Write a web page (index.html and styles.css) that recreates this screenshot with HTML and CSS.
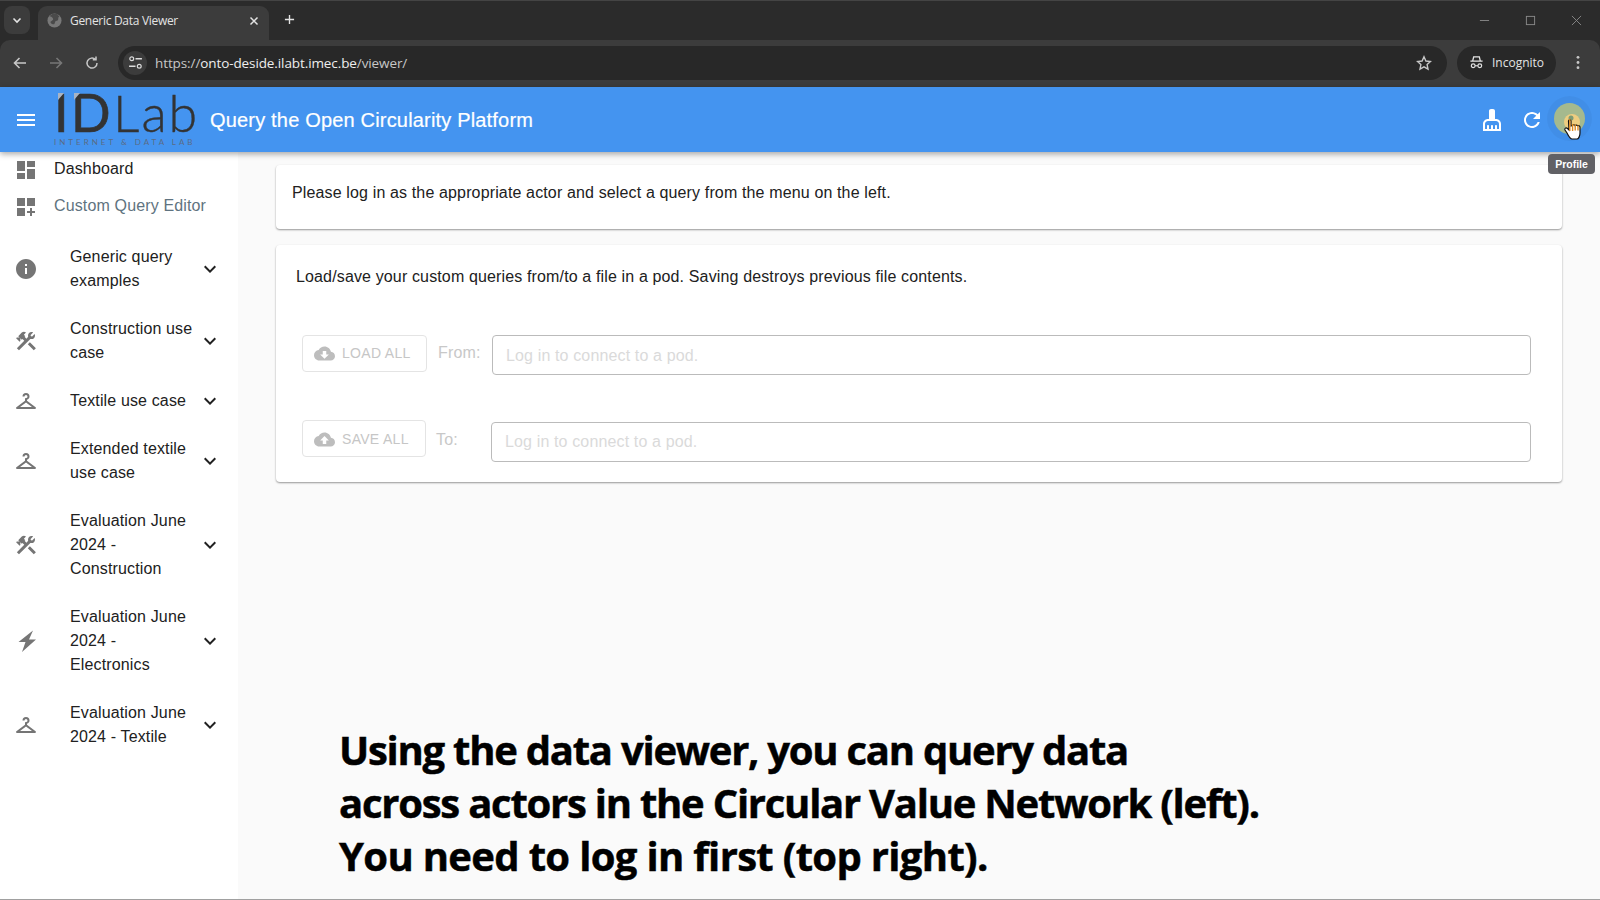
FILE: index.html
```html
<!DOCTYPE html>
<html lang="en">
<head>
<meta charset="utf-8">
<title>Generic Data Viewer</title>
<link rel="stylesheet" href="styles.css">
</head>
<body>
<div class="chrome">
<div class="tabstrip">
  <div class="tabsearch"><svg class="ico12" viewBox="0 0 12 12"><path d="M2.500 4.500L6 8l3.500-3.500" fill="none" stroke="#e3e3e3" stroke-width="1.600"/></svg></div>
  <div class="tab">
    <svg class="fav" viewBox="0 0 16 16"><circle cx="8" cy="8" r="7.500" fill="#787878"/><path d="M2.500 3.500c2 .5 3.500 1 4 2.500S5 8 4 9s1 3 3 3 1-3 2.500-3.500S12 8 12 6s1-2 1.500-1.500L11 1 6 .8z" fill="#4a4a4a"/></svg>
    <span class="tabtitle">Generic Data Viewer</span>
    <svg class="ico12" viewBox="0 0 12 12"><path d="M2.500 2.500l7 7M9.500 2.500l-7 7" stroke="#e3e3e3" stroke-width="1.500"/></svg>
  </div>
  <svg class="newtab" viewBox="0 0 12 12"><path d="M6 1v10M1 6h10" stroke="#e3e3e3" stroke-width="1.500"/></svg>
  <div class="winctl">
    <svg class="win" viewBox="0 0 12 12"><path d="M1 6h10" stroke="#8a8a8a"/></svg>
    <svg class="win" viewBox="0 0 12 12"><rect x="1.500" y="1.500" width="9" height="9" fill="none" stroke="#8a8a8a"/></svg>
    <svg class="win" viewBox="0 0 12 12"><path d="M1 1l10 10M11 1L1 11" stroke="#8a8a8a"/></svg>
  </div>
</div>
<div class="toolbar">
  <svg class="tool" viewBox="0 0 16 16"><path d="M14 8H3M7.500 3L2.500 8l5 5" fill="none" stroke="#c7c7c7" stroke-width="1.600"/></svg>
  <svg class="tool" viewBox="0 0 16 16"><path d="M2 8h11M8.500 3l5 5-5 5" fill="none" stroke="#777" stroke-width="1.600"/></svg>
  <svg class="tool" viewBox="0 0 16 16"><path d="M13 8a5 5 0 1 1-1.500-3.500M12 1.500v3.200H8.800" fill="none" stroke="#c7c7c7" stroke-width="1.500"/></svg>
  <div class="omnibox">
    <div class="siteinfo"><svg viewBox="0 0 14 14" class="ico14"><circle cx="3.500" cy="3.500" r="1.800" fill="none" stroke="#ddd" stroke-width="1.100"/><path d="M7 3.500h6M1 10.500h6" stroke="#ddd" stroke-width="1.200"/><circle cx="10.500" cy="10.500" r="1.800" fill="none" stroke="#ddd" stroke-width="1.100"/></svg></div>
    <span class="url">https://<b class="host">onto-deside.ilabt.imec.be</b>/viewer/</span>
    <svg class="star" viewBox="0 0 16 16"><path d="M8 1.800l1.900 4.200 4.600.5-3.400 3.100.9 4.500L8 11.800l-4 2.300.9-4.500L1.500 6.500l4.600-.5z" fill="none" stroke="#c7c7c7" stroke-width="1.400"/></svg>
  </div>
  <div class="incognito">
    <svg class="ico14" viewBox="0 0 16 16"><path d="M4 6l1-4h6l1 4M1.500 6.500h13" fill="none" stroke="#e3e3e3" stroke-width="1.400"/><circle cx="4.500" cy="11.500" r="2" fill="none" stroke="#e3e3e3" stroke-width="1.300"/><circle cx="11.500" cy="11.500" r="2" fill="none" stroke="#e3e3e3" stroke-width="1.300"/><path d="M6.500 11.500h3" stroke="#e3e3e3" stroke-width="1.200"/></svg>
    <span>Incognito</span>
  </div>
  <svg class="kebab" viewBox="0 0 4 16"><circle cx="2" cy="2.500" r="1.500" fill="#c7c7c7"/><circle cx="2" cy="8" r="1.500" fill="#c7c7c7"/><circle cx="2" cy="13.500" r="1.500" fill="#c7c7c7"/></svg>
</div>
</div>
<header class="appbar">
  <svg class="menu" viewBox="0 0 18 12"><path d="M0 0h18v2H0zM0 5h18v2H0zM0 10h18v2H0z" fill="#fff"/></svg>
  <div class="logo">
    <div class="logo-main"><span class="logo-id">ID</span>Lab</div>
    <div class="logo-sub">INTERNET &amp; DATA LAB</div>
    <svg class="logo-notch" viewBox="0 0 24 7"><path d="M0 0h6L0 7zM16 0h6l-6 7z" fill="#a9b4c4"/></svg>
  </div>
  <h1 class="apptitle">Query the Open Circularity Platform</h1>
  <div class="appactions">
    <svg class="action" viewBox="0 0 24 24"><path d="M16 11h-1V3c0-1.100-.9-2-2-2h-2c-1.100 0-2 .9-2 2v8H8c-2.760 0-5 2.240-5 5v7h18v-7c0-2.760-2.240-5-5-5zm3 10h-2v-3c0-.55-.45-1-1-1s-1 .45-1 1v3h-2v-3c0-.55-.45-1-1-1s-1 .45-1 1v3H9v-3c0-.55-.45-1-1-1s-1 .45-1 1v3H5v-5c0-1.650 1.350-3 3-3h8c1.650 0 3 1.350 3 3v5z" fill="#fff"/></svg>
    <svg class="action" viewBox="0 0 24 24"><path d="M17.650 6.350C16.200 4.900 14.210 4 12 4c-4.420 0-7.990 3.580-7.990 8s3.570 8 7.990 8c3.730 0 6.840-2.550 7.730-6h-2.080c-.82 2.330-3.040 4-5.650 4-3.310 0-6-2.690-6-6s2.690-6 6-6c1.660 0 3.140.69 4.220 1.780L13 11h7V4l-2.350 2.350z" fill="#fff"/></svg>
    <div class="avatar"></div>
  </div>
</header>
<div class="tooltip">Profile</div>
<svg class="cursor" viewBox="0 0 24 30">
  <circle cx="10" cy="10" r="8" fill="#f6cf7e" opacity=".9"/>
  <circle cx="9" cy="6" r="2.500" fill="#7c9a76"/>
  <path d="M6.500 9c0-1.500 2.500-1.500 2.500 0v5l1.500-.5c.5-1 2-1 2.500 0 .8-.7 2-.5 2.500.3 1-.5 2.500 0 2.500 1.500V21c0 3-1.500 6-3 6h-5c-2 0-3-2-5-6l-2-3c-.8-1.500 1-3 2.500-1.500l1.500 1.500z" fill="#fff" stroke="#111" stroke-width="1.200"/>
  <path d="M7.800 7v12M10.600 12v7M13.200 12.500v6M16 13.500v5" stroke="#e08a1e" stroke-width="1.400" fill="none"/>
</svg>
<div class="body">
  <nav class="sidebar">
    <a class="navtop"><svg class="navicon" viewBox="0 0 24 24"><path d="M3 13h8V3H3v10zm0 8h8v-6H3v6zm10 0h8V11h-8v10zm0-18v6h8V3h-8z"/></svg><span>Dashboard</span></a>
    <a class="navtop muted"><svg class="navicon" viewBox="0 0 24 24"><path d="M3 3h8v8H3zm10 0h8v8h-8zM3 13h8v8H3zm15 0h-2v3h-3v2h3v3h2v-3h3v-2h-3z"/></svg><span>Custom Query Editor</span></a>
    <ul class="groups">
      <li class="group"><svg class="navicon" viewBox="0 0 24 24"><path d="M12 2C6.480 2 2 6.480 2 12s4.480 10 10 10 10-4.480 10-10S17.520 2 12 2zm1 15h-2v-6h2v6zm0-8h-2V7h2v2z"/></svg><span class="grouplabel">Generic query examples</span><svg class="chev" viewBox="0 0 24 24"><path d="M7.410 8.590L12 13.170l4.590-4.580L18 10l-6 6-6-6z"/></svg></li>
      <li class="group"><svg class="navicon" viewBox="0 0 24 24"><path d="M13.780 15.300L19.780 21.300L21.890 19.140L15.890 13.140L13.780 15.300ZM17.500 10.100C17.110 10.100 16.690 10.050 16.360 9.910L4.970 21.250L2.860 19.140L10.270 11.740L8.500 9.960L7.780 10.660L6.330 9.250V12.110L5.630 12.810L2.110 9.250L2.810 8.550H5.620L4.220 7.140L7.780 3.580C8.950 2.410 10.830 2.410 12 3.580L9.890 5.740L11.300 7.140L10.590 7.850L12.380 9.630L14.200 7.750C14.060 7.420 14 7 14 6.630C14 4.660 15.560 3.110 17.500 3.110C18.090 3.110 18.610 3.250 19.080 3.530L16.410 6.200L17.910 7.700L20.580 5.030C20.860 5.500 21 6 21 6.630C21 8.550 19.450 10.100 17.500 10.100Z"/></svg><span class="grouplabel">Construction use case</span><svg class="chev" viewBox="0 0 24 24"><path d="M7.410 8.590L12 13.170l4.590-4.580L18 10l-6 6-6-6z"/></svg></li>
      <li class="group"><svg class="navicon" viewBox="0 0 24 24"><path d="M12 4A3.500 3.500 0 0 0 8.500 7.500H10.500A1.500 1.500 0 0 1 12 6A1.500 1.500 0 0 1 13.500 7.500A1.500 1.500 0 0 1 12 9C11.450 9 11 9.450 11 10V11.750L2.400 18.200C1.630 18.780 2.040 20 3 20H21C21.960 20 22.370 18.780 21.600 18.200L13 11.750V10.850C14.440 10.420 15.500 9.080 15.500 7.500A3.500 3.500 0 0 0 12 4M12 13.500L18 18H6Z"/></svg><span class="grouplabel">Textile use case</span><svg class="chev" viewBox="0 0 24 24"><path d="M7.410 8.590L12 13.170l4.590-4.580L18 10l-6 6-6-6z"/></svg></li>
      <li class="group"><svg class="navicon" viewBox="0 0 24 24"><path d="M12 4A3.500 3.500 0 0 0 8.500 7.500H10.500A1.500 1.500 0 0 1 12 6A1.500 1.500 0 0 1 13.500 7.500A1.500 1.500 0 0 1 12 9C11.450 9 11 9.450 11 10V11.750L2.400 18.200C1.630 18.780 2.040 20 3 20H21C21.960 20 22.370 18.780 21.600 18.200L13 11.750V10.850C14.440 10.420 15.500 9.080 15.500 7.500A3.500 3.500 0 0 0 12 4M12 13.500L18 18H6Z"/></svg><span class="grouplabel">Extended textile use case</span><svg class="chev" viewBox="0 0 24 24"><path d="M7.410 8.590L12 13.170l4.590-4.580L18 10l-6 6-6-6z"/></svg></li>
      <li class="group"><svg class="navicon" viewBox="0 0 24 24"><path d="M13.780 15.300L19.780 21.300L21.890 19.140L15.890 13.140L13.780 15.300ZM17.500 10.100C17.110 10.100 16.690 10.050 16.360 9.910L4.970 21.250L2.860 19.140L10.270 11.740L8.500 9.960L7.780 10.660L6.330 9.250V12.110L5.630 12.810L2.110 9.250L2.810 8.550H5.620L4.220 7.140L7.780 3.580C8.950 2.410 10.830 2.410 12 3.580L9.890 5.740L11.300 7.140L10.590 7.850L12.380 9.630L14.200 7.750C14.060 7.420 14 7 14 6.630C14 4.660 15.560 3.110 17.500 3.110C18.090 3.110 18.610 3.250 19.080 3.530L16.410 6.200L17.910 7.700L20.580 5.030C20.860 5.500 21 6 21 6.630C21 8.550 19.450 10.100 17.500 10.100Z"/></svg><span class="grouplabel">Evaluation June 2024 - Construction</span><svg class="chev" viewBox="0 0 24 24"><path d="M7.410 8.590L12 13.170l4.590-4.580L18 10l-6 6-6-6z"/></svg></li>
      <li class="group"><svg class="navicon" viewBox="0 0 24 24"><path d="M19 1.500L4.500 13H11.500L8 23L22 10.500H15Z"/></svg><span class="grouplabel">Evaluation June 2024 - Electronics</span><svg class="chev" viewBox="0 0 24 24"><path d="M7.410 8.590L12 13.170l4.590-4.580L18 10l-6 6-6-6z"/></svg></li>
      <li class="group"><svg class="navicon" viewBox="0 0 24 24"><path d="M12 4A3.500 3.500 0 0 0 8.500 7.500H10.500A1.500 1.500 0 0 1 12 6A1.500 1.500 0 0 1 13.500 7.500A1.500 1.500 0 0 1 12 9C11.450 9 11 9.450 11 10V11.750L2.400 18.200C1.630 18.780 2.040 20 3 20H21C21.960 20 22.370 18.780 21.600 18.200L13 11.750V10.850C14.440 10.420 15.500 9.080 15.500 7.500A3.500 3.500 0 0 0 12 4M12 13.500L18 18H6Z"/></svg><span class="grouplabel">Evaluation June 2024 - Textile</span><svg class="chev" viewBox="0 0 24 24"><path d="M7.410 8.590L12 13.170l4.590-4.580L18 10l-6 6-6-6z"/></svg></li>
    </ul>
  </nav>
  <main class="content">
    <section class="card card-intro">Please log in as the appropriate actor and select a query from the menu on the left.</section>
    <section class="card card-pod">
      <p class="podtext">Load/save your custom queries from/to a file in a pod. Saving destroys previous file contents.</p>
      <div class="podrow podrow-load">
        <button class="podbtn load" disabled><svg class="cloud" viewBox="0 0 24 24"><path d="M19.350 10.040C18.670 6.590 15.640 4 12 4 9.110 4 6.600 5.640 5.350 8.040 2.340 8.360 0 10.910 0 14c0 3.310 2.690 6 6 6h13c2.760 0 5-2.240 5-5 0-2.640-2.050-4.780-4.650-4.960zM17 13l-5 5-5-5h3V9h4v4h3z"/></svg>Load all</button>
        <span class="podlabel from">From:</span>
        <input class="podinput" disabled placeholder="Log in to connect to a pod.">
      </div>
      <div class="podrow podrow-save">
        <button class="podbtn save" disabled><svg class="cloud" viewBox="0 0 24 24"><path d="M19.350 10.040C18.670 6.590 15.640 4 12 4 9.110 4 6.600 5.640 5.350 8.040 2.340 8.360 0 10.910 0 14c0 3.310 2.690 6 6 6h13c2.760 0 5-2.240 5-5 0-2.640-2.050-4.780-4.650-4.960zM14 13v4h-4v-4H7l5-5 5 5h-3z"/></svg>Save all</button>
        <span class="podlabel to">To:</span>
        <input class="podinput" disabled placeholder="Log in to connect to a pod.">
      </div>
    </section>
  </main>
</div>
<div class="caption"><div class="cap1">Using the data viewer, you can query data</div><div class="cap2">across actors in the Circular Value Network (left).</div><div class="cap3">You need to log in first (top right).</div></div>
</body>
</html>
```
FILE: styles.css
```css
* { box-sizing: border-box; }
html, body { margin: 0; height: 900px; overflow: hidden; }
body { font-family: "Liberation Sans", Arial, sans-serif; font-size: 16px; letter-spacing: .14px; color: #212121; background: #fafafa; display: flex; flex-direction: column; position: relative; border-bottom: 1px solid #a0a0a0; }

.chrome { background: #2b2b2b; flex: none; letter-spacing: 0; }
.tabstrip { height: 40px; border-top: 1px solid #444; display: flex; align-items: flex-start; padding-left: 4px; }
.tabsearch { width: 26px; height: 28px; margin-top: 5px; background: #3c3c3c; border-radius: 8px; display: flex; align-items: center; justify-content: center; }
.ico12 { width: 12px; height: 12px; flex: none; }
.ico14 { width: 15px; height: 15px; flex: none; }
.tab { width: 231px; height: 34px; margin-left: 8px; margin-top: 5px; background: #3c3c3c; border-radius: 9px 9px 0 0; display: flex; align-items: center; padding: 0 9px 5px 9px; }
.fav { width: 15px; height: 15px; flex: none; }
.tabtitle { font-family: "Open Sans", sans-serif; font-size: 12px; color: #e3e3e3; margin-left: 8px; flex: 1; letter-spacing: -0.3px; }
.newtab { width: 11px; height: 11px; margin: 13px 0 0 15px; }
.winctl { margin-left: auto; display: flex; gap: 35px; padding: 14px 18px 0 0; }
.win { width: 11px; height: 11px; }

.toolbar { height: 47px; background: #3c3c3c; display: flex; align-items: center; padding: 0 20px 2px 12px; border-radius: 10px 10px 0 0; }
.tool { width: 16px; height: 16px; flex: none; margin-right: 20px; }
.tool:nth-of-type(3) { margin-right: 18px; }
.omnibox { flex: 1; height: 34px; background: #282828; border-radius: 17px; display: flex; align-items: center; padding: 0 15px 0 5px; }
.siteinfo { width: 24px; height: 24px; border-radius: 50%; background: #3c3c3c; display: flex; align-items: center; justify-content: center; flex: none; }
.url { font-family: "Open Sans", sans-serif; font-size: 13.500px; color: #c7c7c7; margin-left: 8px; flex: 1; letter-spacing: -0.1px; }
.host { font-weight: 400; color: #eee; }
.star { width: 16px; height: 16px; flex: none; }
.incognito { margin-left: 10px; width: 99px; height: 34px; background: #282828; border-radius: 17px; display: flex; align-items: center; padding-left: 12px; gap: 8px; font-family: "Open Sans", sans-serif; font-size: 12px; color: #e3e3e3; flex: none; }
.kebab { width: 4px; height: 15px; margin-left: 20px; flex: none; }

.appbar { height: 65px; background: #4494f0; display: flex; align-items: center; flex: none; padding: 0 0 0 17px; box-shadow: 0 2px 6px rgba(0,0,0,.35); position: relative; z-index: 2; color: #fff; }
.menu { width: 18px; height: 12px; flex: none; }
.logo { width: 139px; margin-left: 19px; margin-top: -1px; display: flex; flex-direction: column; color: #333; flex: none; position: relative; }
.logo-main { font-family: "Lato", sans-serif; font-weight: 300; font-size: 52px; line-height: 42px; letter-spacing: 2px; white-space: nowrap; -webkit-text-stroke: .4px #333; }
.logo-id { font-weight: 400; -webkit-text-stroke: .7px #333; letter-spacing: 2.500px; }
.logo-sub { font-family: "Lato", sans-serif; font-size: 8px; line-height: 9px; letter-spacing: 3px; white-space: nowrap; color: #5a6b85; margin-top: 5px; }
.logo-notch { position: absolute; left: 4px; top: 2px; width: 24px; height: 7px; }
.apptitle { font-size: 20px; font-weight: 400; letter-spacing: .18px; margin: 2px 0 0 17px; -webkit-text-stroke: .2px #fff; }
.appactions { margin-left: auto; display: flex; align-items: center; padding-right: 15px; }
.action { width: 24px; height: 24px; fill: #fff; flex: none; margin-right: 16px; margin-top: 1px; }
.action + .action { margin-right: 10px; }
.avatar { width: 31px; height: 31px; border-radius: 50%; background: #a5b98e; box-shadow: 0 0 0 7px rgba(0,0,0,.035); margin-top: -3px; }
.tooltip { position: absolute; left: 1548px; top: 154px; width: 47px; height: 20px; background: #616166; border-radius: 4px; color: #fff; font-size: 10.500px; font-weight: 700; display: flex; align-items: center; justify-content: center; z-index: 3; letter-spacing: 0; }
.cursor { position: absolute; left: 1562px; top: 112px; width: 24px; height: 30px; z-index: 4; }

.body { flex: 1; display: flex; min-height: 0; }
.sidebar { width: 238px; background: #fff; flex: none; }
.navtop { display: flex; align-items: center; height: 37px; padding-bottom: 2px; color: #212121; }
.navtop.muted { color: #5f7380; }
.navtop span { margin: -2px 0 0 16px; }
.navicon { width: 24px; height: 24px; fill: #757575; flex: none; margin-left: 14px; }
.groups { list-style: none; margin: 7px 0 0; padding: 0; }
.group { display: flex; align-items: center; padding: 12px 0; }
.grouplabel { width: 124px; margin-left: 32px; line-height: 24px; }
.chev { width: 24px; height: 24px; fill: #212121; flex: none; margin-left: 4px; }

.content { flex: 1; padding: 13px 38px 0; display: flex; flex-direction: column; gap: 16px; }
.card { background: #fff; border-radius: 4px; box-shadow: 0 1px 2px rgba(0,0,0,.4); }
.card-intro { height: 64px; padding: 16px 16px 0; line-height: 24px; }
.card-pod { height: 237px; padding: 20px 20px 0; }
.podtext { margin: 0; line-height: 24px; }
.podrow { display: flex; align-items: flex-start; padding: 0 11px 0 6px; }
.podrow-load { margin-top: 46px; }
.podrow-save { margin-top: 45px; }
.podbtn { height: 37px; border: 1px solid #e4e4e4; background: #fff; border-radius: 4px; font-family: inherit; font-size: 14px; color: #c6c6c6; text-transform: uppercase; display: flex; align-items: center; padding: 0 14px 2px 11px; flex: none; letter-spacing: .3px; }
.load { width: 125px; }
.save { width: 124px; padding-bottom: 0; }
.cloud { width: 21px; height: 21px; fill: #bdbdbd; margin: 2px 7px 0 0; flex: none; }
.podlabel { color: #c8c8c8; flex: none; line-height: 20px; margin-top: 8px; }
.from { margin-left: 11px; width: 43px; }
.to { margin-left: 10px; width: 55px; margin-top: 10px; }
.podinput { flex: 1; height: 40px; border: 1px solid #bbb; border-radius: 4px; background: #fff; padding: 2px 13px 0; font-family: inherit; font-size: 16px; letter-spacing: .14px; min-width: 0; }
.from + .podinput { margin-left: 11px; }
.to + .podinput { margin-top: 2px; padding-top: 0; }
.podinput::placeholder { color: #dadada; opacity: 1; }

.caption { position: absolute; left: 339px; top: 723px; font-family: "Open Sans", sans-serif; font-weight: 700; font-size: 40px; line-height: 53px; color: #000; white-space: nowrap; z-index: 1; -webkit-text-stroke: .5px #000; }
.cap1 { letter-spacing: -1.250px; }
.cap2 { letter-spacing: -1.240px; }
.cap3 { letter-spacing: -.670px; }
```
